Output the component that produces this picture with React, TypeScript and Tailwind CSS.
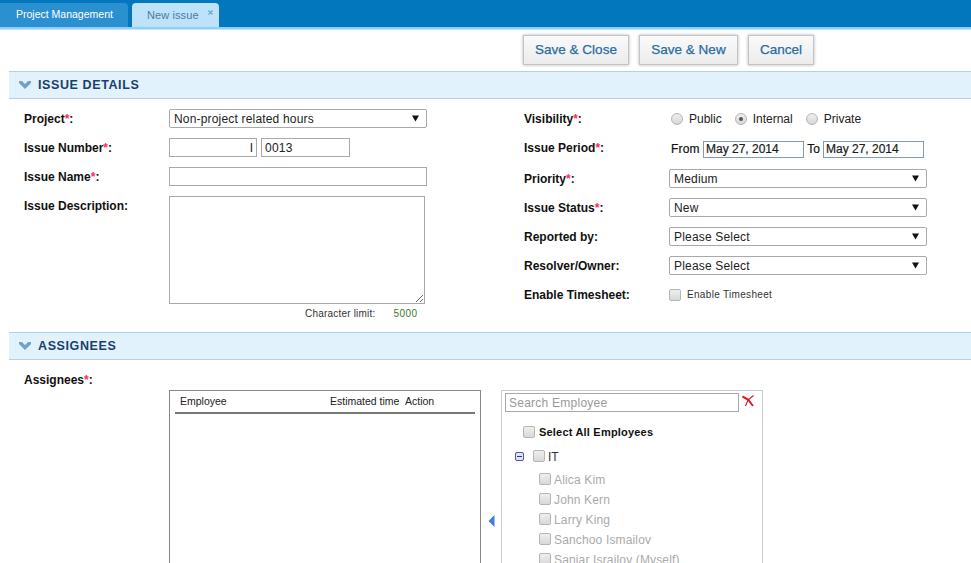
import React from 'react';

const Req = () => <span className="text-[#ff2a55]">*</span>;

const Label = ({ text, req }: { text: string; req?: boolean }) => (
  <div className="h-[19px] text-[12px] font-bold text-[#111] leading-[21px]">
    {text}
    {req && <Req />}:
  </div>
);

const Caret = () => (
  <svg width="7" height="7" viewBox="0 0 7 7" className="shrink-0">
    <path d="M0 0.5H7L3.5 6.5Z" fill="#111" />
  </svg>
);

const Select = ({ value, width }: { value: string; width: string }) => (
  <div className={`${width} h-[19px] flex items-center justify-between pl-[4px] pr-[7px] border border-[#a9a9a9] rounded-[2px] bg-white text-[12px] text-[#222] tracking-[0.18px]`}>
    <span>{value}</span>
    <Caret />
  </div>
);

const Check = ({ className = '' }: { className?: string }) => (
  <div className={`w-[12px] h-[12px] shrink-0 rounded-[2px] border border-[#b5b5b5] bg-gradient-to-b from-[#efefef] to-[#d8d8d8] ${className}`} />
);

const Radio = ({ on, label }: { on?: boolean; label: string }) => (
  <div className="flex items-center gap-[6px] text-[12px] text-[#222]">
    <div className="w-[12px] h-[12px] rounded-full border border-[#b5b5b5] bg-gradient-to-b from-[#efefef] to-[#d8d8d8] flex items-center justify-center">
      {on && <div className="w-[4px] h-[4px] rounded-full bg-[#555]" />}
    </div>
    {label}
  </div>
);

const SectionHead = ({ title }: { title: string }) => (
  <div className="ml-[9px] h-[28px] shrink-0 flex items-center gap-[7px] pl-[10px] bg-[#e1f2fd] border-y border-[#b3d0e5]">
    <svg width="12" height="8" viewBox="0 0 12 8">
      <path d="M0 0L3 0L6 3L9 0L12 0V2L6 8L0 2Z" fill="#6fa3c7" />
    </svg>
    <span className="text-[12.5px] font-bold text-[#1b3f6b] tracking-[0.6px]">{title}</span>
  </div>
);

const ToolButton = ({ text, width }: { text: string; width: string }) => (
  <button className={`${width} h-[30px] border border-[#c4c4c4] bg-gradient-to-b from-[#fafafa] to-[#ececec] shadow-[0_0_3px_rgba(0,0,0,0.3)] text-[13.5px] [-webkit-text-stroke:0.25px_#2a6d9e] text-[#2a6d9e]`}>
    {text}
  </button>
);

const DateInput = ({ value }: { value: string }) => (
  <input
    readOnly
    value={value}
    className="w-[101px] h-[17px] px-[2px] border border-[#7f9db9] text-[12px] text-[#222] outline-none"
  />
);

const employees = ['Alica Kim', 'John Kern', 'Larry King', 'Sanchoo Ismailov', 'Sanjar Israilov (Myself)'];

export default function App() {
  return (
    <div className="w-full h-screen overflow-hidden bg-white flex flex-col [font-family:'Liberation_Sans',Arial,sans-serif]">
      {/* Tab strip */}
      <div className="h-[27px] shrink-0 bg-[#0277bd] flex items-end gap-[4px]">
        <div className="w-[128px] h-[24px] rounded-tr-[4px] bg-[#2b90d0] flex items-center pl-[16px] text-[10.5px] font-medium text-white">
          Project Management
        </div>
        <div className="relative w-[87px] h-[24px] rounded-t-[4px] bg-[#bde3fb] flex items-center pl-[15px] text-[11px] tracking-[0.1px] text-[#4a7ba6]">
          New issue
          <svg width="5" height="5" viewBox="0 0 5 5" className="absolute right-[6px] top-[7px]">
            <path d="M0.5 0.5L4.5 4.5M4.5 0.5L0.5 4.5" stroke="#6fa3c7" strokeWidth="1.2" />
          </svg>
        </div>
      </div>
      <div className="h-[3px] shrink-0 bg-[#8fcdfb] border-b border-[#c5e5fc]" />

      {/* Toolbar */}
      <div className="h-[41px] shrink-0 flex items-start gap-[10px] pt-[5px] pl-[523px]">
        <ToolButton text="Save & Close" width="w-[106px]" />
        <ToolButton text="Save & New" width="w-[99px]" />
        <ToolButton text="Cancel" width="w-[66px]" />
      </div>

      <SectionHead title="ISSUE DETAILS" />

      {/* Issue details form */}
      <div className="h-[233px] shrink-0 flex pt-[10px]">
        <div className="w-[500px] shrink-0 ml-[24px] flex flex-col gap-[10px]">
          <div className="flex">
            <div className="w-[145px]"><Label text="Project" req /></div>
            <Select value="Non-project related hours" width="w-[258px]" />
          </div>
          <div className="flex">
            <div className="w-[145px]"><Label text="Issue Number" req /></div>
            <div className="flex gap-[4px]">
              <input readOnly value="I" className="w-[88px] h-[19px] px-[3px] text-right border border-[#a9a9a9] text-[12px] text-[#222] outline-none" />
              <input readOnly value="0013" className="w-[89px] h-[19px] px-[3px] border border-[#a9a9a9] text-[12px] text-[#222] tracking-[0.25px] outline-none" />
            </div>
          </div>
          <div className="flex">
            <div className="w-[145px]"><Label text="Issue Name" req /></div>
            <input readOnly className="w-[258px] h-[19px] border border-[#a9a9a9] outline-none" />
          </div>
          <div className="flex">
            <div className="w-[145px]"><Label text="Issue Description" /></div>
            <div className="flex flex-col">
              <textarea readOnly className="block w-[256px] h-[108px] border border-[#a9a9a9] outline-none" />
              <div className="flex mt-[3px] h-[12px] items-center text-[10px] text-[#333] tracking-[0.2px]">
                <span className="ml-[136px]">Character limit:</span>
                <span className="ml-[18px] tracking-[0.5px] text-[#3c7a2e]">5000</span>
              </div>
            </div>
          </div>
        </div>

        <div className="flex-1">
          <div className="flex h-[19px] mb-[10px]">
            <div className="w-[145px]"><Label text="Visibility" req /></div>
            <div className="flex items-center gap-[13px] ml-[2px]">
              <Radio label="Public" />
              <Radio on label="Internal" />
              <Radio label="Private" />
            </div>
          </div>
          <div className="flex h-[19px] mb-[12px]">
            <div className="w-[147px]"><Label text="Issue Period" req /></div>
            <div className="flex items-center gap-[2px] pt-[3px] text-[12px] text-[#111] [-webkit-text-stroke:0.2px_#111]">
              <span className="w-[30px] tracking-[0.2px]">From</span>
              <DateInput value="May 27, 2014" />
              <span className="w-[15px] text-center">To</span>
              <DateInput value="May 27, 2014" />
            </div>
          </div>
          <div className="flex flex-col gap-[10px]">
            <div className="flex">
              <div className="w-[145px]"><Label text="Priority" req /></div>
              <Select value="Medium" width="w-[258px]" />
            </div>
            <div className="flex">
              <div className="w-[145px]"><Label text="Issue Status" req /></div>
              <Select value="New" width="w-[258px]" />
            </div>
            <div className="flex">
              <div className="w-[145px]"><Label text="Reported by" /></div>
              <Select value="Please Select" width="w-[258px]" />
            </div>
            <div className="flex">
              <div className="w-[145px]"><Label text="Resolver/Owner" /></div>
              <Select value="Please Select" width="w-[258px]" />
            </div>
            <div className="flex items-center">
              <div className="w-[145px]"><Label text="Enable Timesheet" /></div>
              <Check />
              <span className="ml-[6px] text-[10px] text-[#333] tracking-[0.32px]">Enable Timesheet</span>
            </div>
          </div>
        </div>
      </div>

      <SectionHead title="ASSIGNEES" />

      {/* Assignees */}
      <div className="flex-1 min-h-0 pl-[24px] pt-[10px]">
        <Label text="Assignees" req />
        <div className="flex mt-[1px] ml-[145px]">
          <div className="w-[312px] h-[200px] border border-[#888] px-[5px] pt-[2px]">
            <div className="h-[18px] flex items-center pl-[5px] border-b-2 border-[#777] text-[10.5px] text-[#222] box-content pb-[1px]">
              <span className="w-[150px]">Employee</span>
              <span className="w-[75px]">Estimated time</span>
              <span>Action</span>
            </div>
          </div>
          <div className="w-[20px] flex justify-center pt-[125px]">
            <svg width="7" height="12" viewBox="0 0 7 12">
              <path d="M6.5 0V12L0.5 6Z" fill="#3f7fdc" />
            </svg>
          </div>
          <div className="w-[262px] h-[200px] border border-[#ccc] pl-[3px] pt-[2px]">
            <div className="flex items-center">
              <input readOnly placeholder="Search Employee" className="w-[234px] h-[19px] px-[3px] border border-[#a9a9a9] text-[12px] tracking-[0.25px] outline-none placeholder:text-[#999]" />
              <svg width="12" height="12" viewBox="0 0 12 12" className="ml-[3px] -mt-[4px]">
                <path d="M0.5 1.5L6 4.5L11 11" stroke="#e01b1b" strokeWidth="2" fill="none" />
                <path d="M11.5 0.5L6 5L3.5 11" stroke="#e01b1b" strokeWidth="1.2" fill="none" />
              </svg>
            </div>
            <div className="flex items-center mt-[13px] ml-[18px] h-[14px]">
              <Check />
              <span className="ml-[4px] text-[11px] font-bold text-[#111] tracking-[0.2px]">Select All Employees</span>
            </div>
            <div className="flex items-center mt-[10px] ml-[10px] h-[14px]">
              <div className="w-[9px] h-[9px] rounded-[2px] border border-[#4a55a8] bg-[#dfe4f7] flex items-center justify-center">
                <div className="w-[5px] h-[1px] bg-[#2a3488]" />
              </div>
              <Check className="ml-[9px]" />
              <span className="ml-[3px] pt-[1px] text-[12px] text-[#333]">IT</span>
            </div>
            <div className="flex flex-col mt-[7px] ml-[34px]">
              {employees.map(name => (
                <div key={name} className="flex items-center h-[20px]">
                  <Check className="-mt-[2px]" />
                  <span className="ml-[3px] text-[12px] text-[#aaa] tracking-[0.15px]">{name}</span>
                </div>
              ))}
            </div>
          </div>
        </div>
      </div>
    </div>
  );
}
